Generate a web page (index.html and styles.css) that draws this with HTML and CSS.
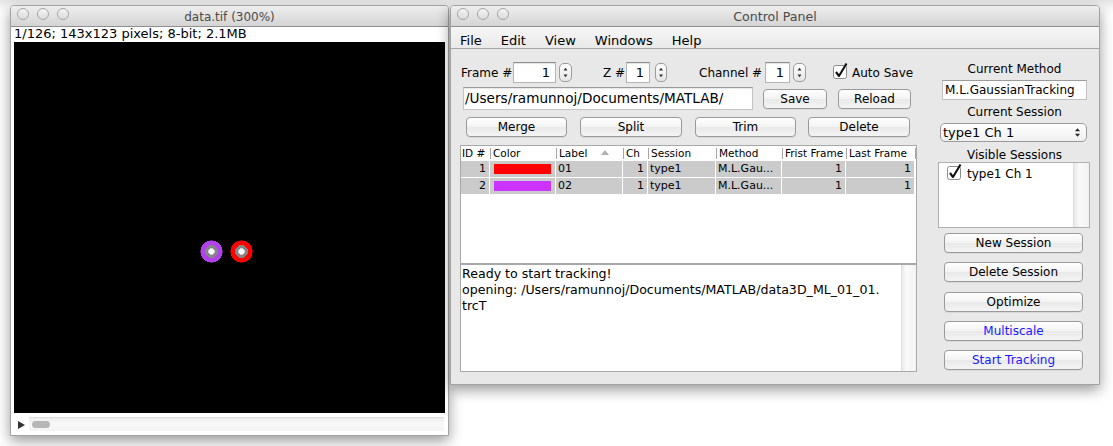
FILE: index.html
```html
<!DOCTYPE html>
<html>
<head>
<meta charset="utf-8">
<link rel="stylesheet" href="styles.css">
</head>
<body>
<div class="desk">
  <div class="win imgwin">
    <div class="titlebar">
      <div class="lights"><span></span><span></span><span></span></div>
      <div class="title">data.tif (300%)</div>
    </div>
    <div class="info">1/126; 143x123 pixels; 8-bit; 2.1MB</div>
    <div class="canvas">
      <div class="spot spot-purple"></div>
      <div class="spot spot-red"></div>
    </div>
    <div class="scrollrow">
      <span class="play"></span>
      <div class="track"><div class="thumb"></div></div>
    </div>
  </div>

  <div class="win panel">
    <div class="titlebar">
      <div class="lights"><span></span><span></span><span></span></div>
      <div class="title big">Control Panel</div>
    </div>
    <div class="menubar">
      <span>File</span><span>Edit</span><span>View</span><span>Windows</span><span>Help</span>
    </div>
    <div class="pbody">
      <div class="main">
        <div class="row row1">
          <span class="lbl w-frame">Frame #</span>
          <div class="num w43">1</div>
          <div class="stepper ml3"><svg width="11" height="17" viewBox="0 0 11 17"><path d="M3.5 6.5 L5.5 3.8 L7.5 6.5Z" fill="#333"/><path d="M3.5 10.5 L5.5 13.2 L7.5 10.5Z" fill="#333"/></svg></div>
          <span class="lbl w-z">Z #</span>
          <div class="num w24">1</div>
          <div class="stepper ml5 narrow"><svg width="10" height="17" viewBox="0 0 10 17"><path d="M3 6.5 L5 3.8 L7 6.5Z" fill="#333"/><path d="M3 10.5 L5 13.2 L7 10.5Z" fill="#333"/></svg></div>
          <span class="lbl w-ch">Channel #</span>
          <div class="num w25">1</div>
          <div class="stepper ml3"><svg width="11" height="17" viewBox="0 0 11 17"><path d="M3.5 6.5 L5.5 3.8 L7.5 6.5Z" fill="#333"/><path d="M3.5 10.5 L5.5 13.2 L7.5 10.5Z" fill="#333"/></svg></div>
          <svg class="check autosave" width="16" height="17" viewBox="0 0 16 17"><rect x="0.5" y="3.5" width="13" height="13" rx="2" fill="#fff" stroke="#8c8c8c"/><path d="M3 10 L6 14 L13.5 1.5" fill="none" stroke="#111" stroke-width="2.1" stroke-linejoin="round"/></svg>
          <span class="lbl">Auto Save</span>
        </div>
        <div class="row row2">
          <div class="path">/Users/ramunnoj/Documents/MATLAB/</div>
          <div class="btn b-save">Save</div>
          <div class="btn b-reload">Reload</div>
        </div>
        <div class="row row3">
          <div class="btn b-merge">Merge</div>
          <div class="btn b-split">Split</div>
          <div class="btn b-trim">Trim</div>
          <div class="btn b-delete">Delete</div>
        </div>
        <div class="table">
          <div class="thead">
            <div class="th">ID #</div>
            <div class="th sep">Color</div>
            <div class="th sep">Label<span class="sort"></span></div>
            <div class="th sep">Ch</div>
            <div class="th sep">Session</div>
            <div class="th sep">Method</div>
            <div class="th sep">Frist Frame</div>
            <div class="th sep">Last Frame</div>
            <div class="th sep"></div>
          </div>
          <div class="tr">
            <div class="td r">1</div>
            <div class="td"><span class="sw red"></span></div>
            <div class="td">01</div>
            <div class="td r">1</div>
            <div class="td">type1</div>
            <div class="td">M.L.Gau...</div>
            <div class="td r">1</div>
            <div class="td r">1</div>
          </div>
          <div class="tr">
            <div class="td r">2</div>
            <div class="td"><span class="sw purple"></span></div>
            <div class="td">02</div>
            <div class="td r">1</div>
            <div class="td">type1</div>
            <div class="td">M.L.Gau...</div>
            <div class="td r">1</div>
            <div class="td r">1</div>
          </div>
        </div>
        <div class="log">
          <div class="logtext">Ready to start tracking!<br>opening: /Users/ramunnoj/Documents/MATLAB/data3D_ML_01_01.<br>trcT</div>
          <div class="vscroll"></div>
        </div>
      </div>
      <div class="side">
        <div class="slbl first">Current Method</div>
        <div class="field">M.L.GaussianTracking</div>
        <div class="slbl">Current Session</div>
        <div class="select">type1 Ch 1<svg class="updown" width="7" height="11" viewBox="0 0 7 11"><path d="M1 4.2 L3.5 1.2 L6 4.2Z" fill="#222"/><path d="M1 6.8 L3.5 9.8 L6 6.8Z" fill="#222"/></svg></div>
        <div class="slbl vis">Visible Sessions</div>
        <div class="list">
          <div class="item"><svg class="check" width="16" height="17" viewBox="0 0 16 17"><rect x="0.5" y="3.5" width="13" height="13" rx="2" fill="#fff" stroke="#8c8c8c"/><path d="M3 10 L6 14 L13.5 1.5" fill="none" stroke="#111" stroke-width="2.1" stroke-linejoin="round"/></svg><span>type1 Ch 1</span></div>
          <div class="lscroll"></div>
        </div>
        <div class="sbtn first">New Session</div>
        <div class="sbtn">Delete Session</div>
        <div class="sbtn m10">Optimize</div>
        <div class="sbtn blue">Multiscale</div>
        <div class="sbtn blue">Start Tracking</div>
      </div>
    </div>
  </div>
</div>
</body>
</html>
```
FILE: styles.css
```css
* { box-sizing: border-box; }
html, body { margin: 0; padding: 0; }
body {
  width: 1113px; height: 446px; overflow: hidden;
  background: #fff;
  font-family: "DejaVu Sans", "Liberation Sans", sans-serif;
  color: #000;
}
.desk {
  display: flex; align-items: flex-start;
  padding: 5px 0 0 10px; gap: 1px;
  background: linear-gradient(#e4e4e4, #f4f4f4 6px, #fff 14px);
  height: 446px;
}
.win {
  border: 1px solid #a2a2a2;
  border-radius: 4px 4px 0 0;
  box-shadow: 0 5px 14px rgba(0,0,0,0.40);
  position: relative;
  overflow: hidden;
}
.titlebar {
  height: 21px; flex: none; position: relative;
  background: linear-gradient(#eeeeee, #d4d4d4);
  border-bottom: 1px solid #8f8f8f;
  display: flex; align-items: center; justify-content: center;
}
.lights {
  position: absolute; left: 6px; top: 2px;
  display: flex; gap: 8px;
}
.lights span {
  width: 12px; height: 12px; border-radius: 50%;
  border: 1px solid #a6a6a6;
  background: linear-gradient(#f4f4f4, #dcdcdc);
}
.title {
  font-size: 12px; line-height: 14px; color: #4a4a4a;
  padding-top: 1px;
}
.title.big { font-size: 12.6px; }

/* image window */
.imgwin {
  width: 439px; height: 431px; background: #fff;
  display: flex; flex-direction: column;
}
.info {
  height: 15px; font-size: 13px; line-height: 14px;
  padding-left: 3px; white-space: nowrap;
}
.canvas {
  position: relative;
  margin-left: 3px; width: 431px; height: 371px;
  background: #000; flex: none;
}
.spot {
  position: absolute; width: 23px; height: 23px; border-radius: 50%;
  filter: blur(0.3px);
}
.spot-purple {
  left: 186px; top: 198px;
  background: radial-gradient(circle, #fff 0 2.3px, #cfcfcf 2.3px 3.6px, #858585 3.6px 6.4px, #b240ec 6.4px 10.8px, transparent 11.3px);
}
.spot-red {
  left: 216px; top: 198px;
  background: radial-gradient(circle, #fff 0 2.3px, #cfcfcf 2.3px 3.6px, #858585 3.6px 6.4px, #f00 6.4px 10.8px, transparent 11.3px);
}
.scrollrow {
  display: flex; align-items: flex-start;
  padding: 4px 0 0 7px; height: 22px;
}
.play {
  width: 0; height: 0; margin-top: 4px;
  border-left: 7px solid #333;
  border-top: 4.5px solid transparent;
  border-bottom: 4.5px solid transparent;
}
.track {
  margin-left: 4px; width: 415px; height: 14px;
  background: linear-gradient(#ececec, #f8f8f8 40%, #f4f4f4);
  border-top: 1px solid #dcdcdc;
  padding: 3px 0 0 3px;
}
.thumb {
  width: 18px; height: 7px; border-radius: 4px; background: #b7b7b7;
}

/* control panel */
.panel {
  width: 650px; height: 380px; background: #e8e8e8;
  display: flex; flex-direction: column;
}
.menubar {
  height: 22px; flex: none;
  background: linear-gradient(#f6f6f6, #e9e9e9);
  border-bottom: 1px solid #a6a6a6;
  display: flex; gap: 19px;
  padding: 6px 0 0 9px;
  font-size: 13px; line-height: 16px;
}
.pbody { display: flex; flex: 1; }
.main { width: 479px; padding-left: 10px; padding-top: 13px; }
.row { display: flex; align-items: center; }
.row1 { height: 21px; }
.lbl { font-size: 12px; white-space: nowrap; flex: none; }
.w-frame { width: 52px; }
.w-z { width: 23px; margin-left: 31px; }
.w-ch { width: 66px; margin-left: 32px; }
.num {
  height: 21px; background: #fff;
  border: 1px solid #b4b4b4; border-top-color: #8e8e8e;
  box-shadow: inset 0 1px 1px rgba(0,0,0,0.12);
  font-size: 13px; line-height: 19px; text-align: right; padding-right: 5px;
}
.w43 { width: 43px; }
.w24 { width: 24px; }
.w25 { width: 25px; }
.stepper {
  width: 13px; height: 19px; border-radius: 5px;
  border: 1px solid #9c9c9c;
  background: linear-gradient(#ffffff, #e6e6e6);
  display: flex;
}
.stepper.narrow { width: 12px; }
.ml3 { margin-left: 3px; }
.ml5 { margin-left: 5px; }
.check { flex: none; display: block; }
.autosave { margin-left: 27px; margin-top: -4px; margin-right: 3px; }

.row2 { margin-top: 4px; height: 23px; }
.path {
  margin-left: 2px; width: 290px; height: 23px; background: #fff;
  border: 1px solid #c4c4c4; border-top-color: #9a9a9a;
  box-shadow: inset 0 1px 1px rgba(0,0,0,0.1);
  font-size: 13.6px; line-height: 21px; padding-left: 1px; white-space: nowrap;
}
.btn, .sbtn {
  height: 20px; border: 1px solid #9a9a9a; border-radius: 4px;
  background: linear-gradient(#ffffff, #f3f3f3 50%, #e9e9e9 51%, #f4f4f4);
  box-shadow: 0 1px 0 rgba(0,0,0,0.06);
  font-size: 12px; line-height: 18px; text-align: center; white-space: nowrap;
}
.b-save { margin-left: 10px; width: 64px; }
.b-reload { margin-left: 11px; width: 73px; }
.row3 { margin-top: 7px; height: 20px; }
.b-merge { margin-left: 5px; width: 101px; }
.b-split { margin-left: 13px; width: 102px; }
.b-trim { margin-left: 13px; width: 101px; }
.b-delete { margin-left: 12px; width: 102px; }

.table {
  margin-top: 8px; margin-left: -1px; width: 457px; height: 119px;
  background: #fff; border: 1px solid #a8a8a8;
}
.thead, .tr {
  display: grid;
  grid-template-columns: 29px 66px 67px 25px 68px 66px 64px 69px 1px;
}
.thead { height: 15px; }
.th {
  font-size: 10.5px; line-height: 14px; padding-left: 1px; white-space: nowrap;
  position: relative; overflow: hidden;
}
.th.sep { padding-left: 3px; }
.th.sep::before {
  content: ""; position: absolute; left: 0; top: 2px; width: 1px; height: 11px; background: #a6a6a6;
}
.sort {
  display: inline-block; width: 0; height: 0; margin-left: 14px; vertical-align: 2px;
  border-bottom: 5px solid #b0b0b0;
  border-left: 4px solid transparent; border-right: 4px solid transparent;
}
.tr { height: 17px; border-bottom: 1px solid #fff; }
.td {
  background: #cbcbcb; border-right: 1px solid #fff;
  font-size: 11px; line-height: 16px; padding-left: 2px; white-space: nowrap; overflow: hidden;
}
.td.r { text-align: right; padding-right: 3px; }
.sw { display: inline-block; width: 57px; height: 10px; margin: 3px 0 0 2px; vertical-align: top; }
.sw.red { background: #ff0000; }
.sw.purple { background: #cc33ff; }

.log {
  margin-left: -1px; width: 457px; height: 108px;
  background: #fff; border: 1px solid #a8a8a8;
  display: flex;
}
.logtext {
  flex: 1; font-size: 12.6px; line-height: 16px; padding: 1px 0 0 1px; white-space: nowrap;
}
.vscroll {
  width: 15px; background: linear-gradient(90deg, #e9e9e9, #fafafa 30%, #f3f3f3);
  border-left: 1px solid #e0e0e0;
}

.side { width: 169px; padding-top: 13px; }
.slbl { font-size: 12px; line-height: 14px; text-align: center; white-space: nowrap; margin-top: 5px; }
.slbl.first { margin-top: 0; }
.slbl.vis { margin-top: 6px; }
.field {
  margin: 4px 0 0 12px; width: 145px; height: 20px; background: #fff;
  border: 1px solid #c0c0c0; border-top-color: #9c9c9c;
  font-size: 12px; line-height: 18px; padding-left: 2px; white-space: nowrap; overflow: hidden;
}
.select {
  position: relative;
  margin: 4px 0 0 10px; width: 147px; height: 19px;
  border: 1px solid #9a9a9a; border-radius: 5px;
  background: linear-gradient(#ffffff, #f0f0f0);
  font-size: 13px; line-height: 17px; padding-left: 2px; white-space: nowrap;
}
.updown { position: absolute; right: 5px; top: 3px; }
.list {
  margin: 0 0 0 8px; width: 152px; height: 66px; background: #fff;
  border: 1px solid #b0b0b0; display: flex;
}
.item { flex: 1; display: flex; align-items: flex-start; padding: 0 0 0 8px; }
.item .check { margin-top: 0px; }
.item span { font-size: 12px; line-height: 16px; margin: 3px 0 0 4px; white-space: nowrap; }
.lscroll {
  width: 16px; background: linear-gradient(90deg, #e8e8e8, #fafafa 35%, #f2f2f2);
  border-left: 1px solid #dedede;
}
.sbtn { margin: 9px 0 0 14px; width: 139px; }
.sbtn.first { margin-top: 5px; }
.sbtn.m10 { margin-top: 10px; }
.sbtn.blue { color: #1a1aff; }
```
